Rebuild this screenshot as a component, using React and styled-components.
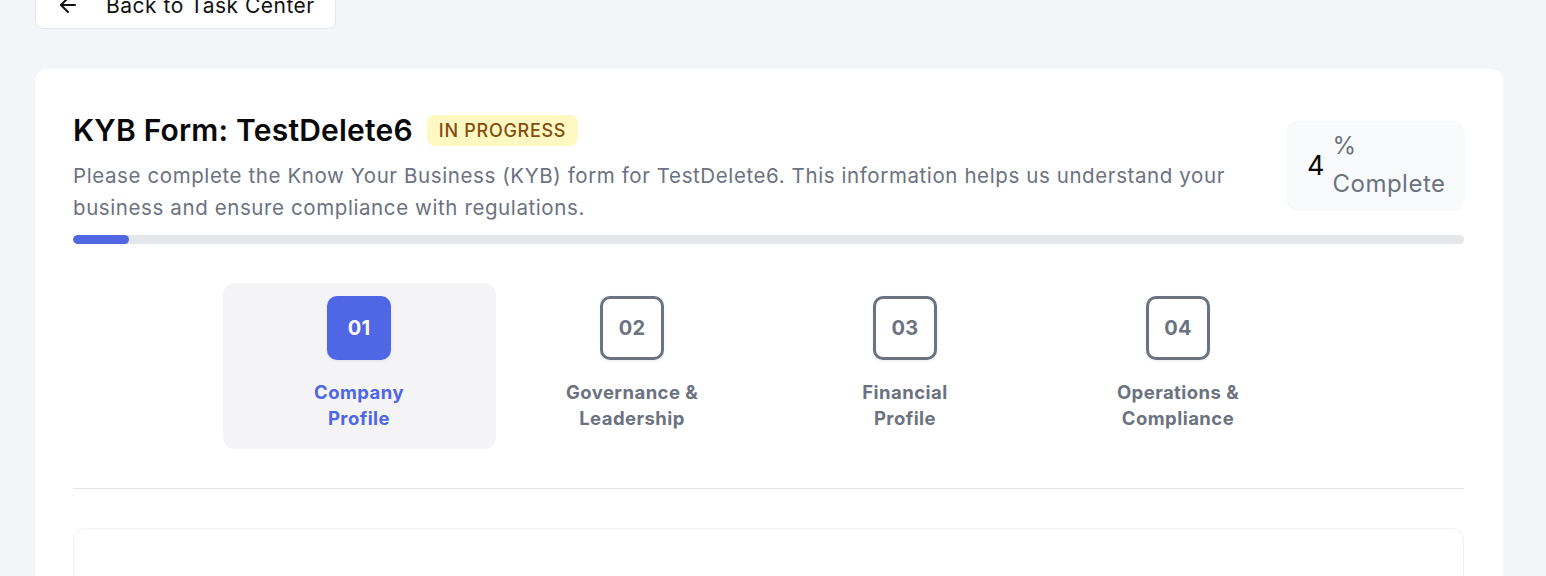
import React from "react";
import styled, { createGlobalStyle } from "styled-components";
import { ArrowLeft } from "lucide-react";

const GlobalStyle = createGlobalStyle`
  body {
    margin: 0;
    background: #f4f5f8;
    font-family: Inter, "Noto Sans", sans-serif;
    color: #0b0b0f;
  }
`;

const Page = styled.div`
  padding: 0 43px 0 35px;
  margin-top: -19px;
`;

const BackButton = styled.button`
  display: flex;
  align-items: center;
  gap: 26px;
  height: 48px;
  width: 301px;
  padding: 0 20px;
  background: #fff;
  border: 1px solid #e5e7eb;
  border-radius: 8px;
  font-family: inherit;
  font-size: 21px;
  letter-spacing: 0.5px;
  white-space: nowrap;
  color: #111;
  margin-bottom: 40px;
`;

const Card = styled.div`
  background: #fff;
  border-radius: 12px;
  padding: 43px 39px 0 38px;
  min-height: 520px;
`;

const HeaderRow = styled.div`
  display: flex;
  justify-content: space-between;
  gap: 48px;
`;

const HeaderText = styled.div`
  flex: 1;
`;

const TitleRow = styled.div`
  display: flex;
  align-items: center;
  gap: 14px;
`;

const Title = styled.h1`
  margin: 0;
  font-size: 30px;
  font-weight: 600;
  letter-spacing: 0.2px;
  color: #09090b;
`;

const Badge = styled.span`
  background: #fef9c3;
  color: #854d0e;
  font-size: 18px;
  font-weight: 500;
  padding: 5px 12px;
  border-radius: 8px;
  letter-spacing: 0.7px;
`;

const Description = styled.p`
  margin: 12px 0 0;
  font-size: 20.5px;
  letter-spacing: 0.6px;
  line-height: 32px;
  color: #6b7280;
`;

const PercentBox = styled.div`
  display: flex;
  align-items: center;
  gap: 8px;
  align-self: flex-start;
  margin-top: 9px;
  width: 177px;
  box-sizing: border-box;
  padding: 6px 20px;
  background: #f9fafb;
  border-radius: 10px;
  box-shadow: 0 1px 2px rgba(0, 0, 0, 0.05);
`;

const PercentValue = styled.span`
  font-size: 27px;
  color: #09090b;
`;

const PercentLabel = styled.span`
  font-size: 24px;
  letter-spacing: 0.5px;
  line-height: 38px;
  color: #6b7280;
  width: 120px;
`;

const Track = styled.div`
  margin-top: 11px;
  height: 9px;
  border-radius: 999px;
  background: #e5e7eb;
  overflow: hidden;
`;

const Fill = styled.div`
  height: 100%;
  background: #5066e3;
  border-radius: 999px;
`;

const Steps = styled.div`
  display: grid;
  grid-template-columns: repeat(4, 273px);
  justify-content: center;
  margin-top: 39px;
`;

const Step = styled.div`
  display: flex;
  flex-direction: column;
  align-items: center;
  padding: 13px 0 18px;
  border-radius: 12px;
  background: ${(p) => (p.$active ? "#f4f4f7" : "transparent")};
`;

const StepNumber = styled.div`
  width: 64px;
  height: 64px;
  box-sizing: border-box;
  display: flex;
  align-items: center;
  justify-content: center;
  border-radius: 10px;
  font-size: 20px;
  font-weight: 700;
  letter-spacing: 0.3px;
  background: ${(p) => (p.$active ? "#4f66e5" : "#fff")};
  color: ${(p) => (p.$active ? "#fff" : "#6b7280")};
  border: ${(p) => (p.$active ? "none" : "3px solid #6b7280")};
  box-shadow: 0 1px 3px rgba(0, 0, 0, 0.08);
`;

const StepLabel = styled.div`
  margin-top: 19px;
  text-align: center;
  font-size: 18.5px;
  font-weight: 700;
  letter-spacing: 0.45px;
  line-height: 26px;
  color: ${(p) => (p.$active ? "#4f66e5" : "#6b7280")};
`;

const Divider = styled.hr`
  margin: 39px 0 0;
  border: none;
  border-top: 1px solid #e5e7eb;
`;

const Section = styled.div`
  margin-top: 39px;
  height: 120px;
  border: 1px solid #f0f0f2;
  border-radius: 12px;
`;

const steps = [
  { n: "01", label: ["Company", "Profile"] },
  { n: "02", label: ["Governance &", "Leadership"] },
  { n: "03", label: ["Financial", "Profile"] },
  { n: "04", label: ["Operations &", "Compliance"] },
];

export default function App() {
  const progress = 4;
  return (
    <>
      <GlobalStyle />
      <Page>
        <BackButton>
          <ArrowLeft size={24} strokeWidth={2} />
          Back to Task Center
        </BackButton>
        <Card>
          <HeaderRow>
            <HeaderText>
              <TitleRow>
                <Title>KYB Form: TestDelete6</Title>
                <Badge>IN PROGRESS</Badge>
              </TitleRow>
              <Description>
                Please complete the Know Your Business (KYB) form for
                TestDelete6. This information helps us understand your
                business and ensure compliance with regulations.
              </Description>
            </HeaderText>
            <PercentBox>
              <PercentValue>{progress}</PercentValue>
              <PercentLabel>% Complete</PercentLabel>
            </PercentBox>
          </HeaderRow>
          <Track>
            <Fill style={{ width: `${progress}%` }} />
          </Track>
          <Steps>
            {steps.map((s, i) => (
              <Step key={s.n} $active={i === 0}>
                <StepNumber $active={i === 0}>{s.n}</StepNumber>
                <StepLabel $active={i === 0}>
                  {s.label[0]}
                  <br />
                  {s.label[1]}
                </StepLabel>
              </Step>
            ))}
          </Steps>
          <Divider />
          <Section />
        </Card>
      </Page>
    </>
  );
}
